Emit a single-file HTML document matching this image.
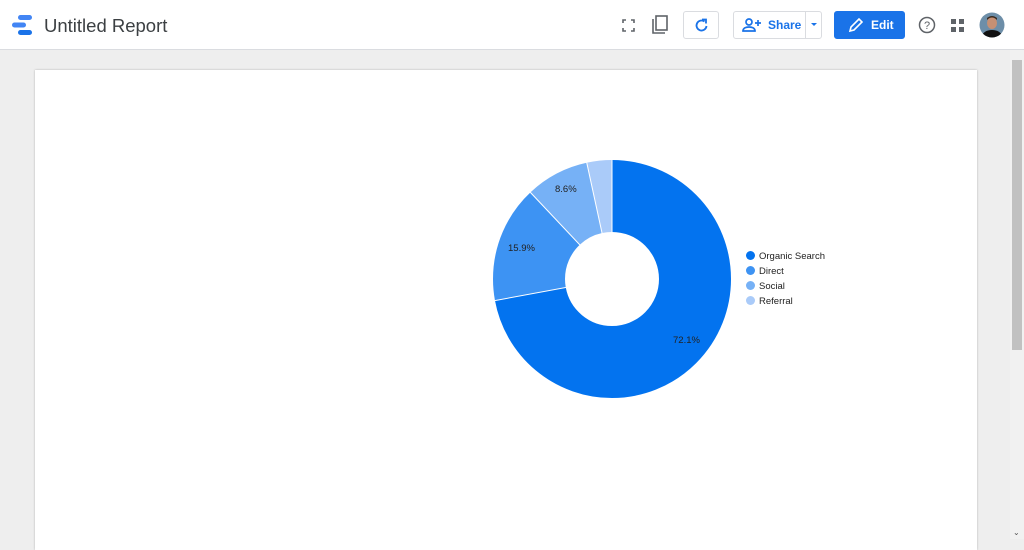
<!DOCTYPE html>
<html><head><meta charset="utf-8"><style>
*{margin:0;padding:0;box-sizing:border-box}
body{width:1024px;height:539px;overflow:hidden;background:#eeeeee;font-family:"Liberation Sans",Arial,sans-serif;position:relative}
.hdr{position:absolute;left:0;top:0;width:1024px;height:50px;background:#fff;border-bottom:1px solid #dadce0}
.title{position:absolute;left:44px;top:15px;font-size:18.5px;color:#3c4043}
.btn{position:absolute;top:11px;height:28px;border:1px solid #dadce0;border-radius:3px;background:#fff}
.page{position:absolute;left:35px;top:70px;width:942px;height:480px;background:#fff;box-shadow:0 0 2px rgba(0,0,0,.25)}
.sb{position:absolute;left:1010px;top:50px;width:14px;height:489px;background:#f1f1f1}
.th{position:absolute;left:1012px;top:60px;width:10px;height:290px;background:#c1c1c1}
.lg{position:absolute;left:746px;font-size:9.5px;color:#222}
.lg i{display:inline-block;width:9px;height:9px;border-radius:50%;margin-right:4px;vertical-align:-1px}
.lb{position:absolute;font-size:9.5px;color:#222}
</style></head><body>
<div class="hdr">
<svg style="position:absolute;left:10px;top:14px" width="24" height="22"><rect x="8" y="1" width="14" height="5" rx="2.5" fill="#4285f4"/><rect x="2" y="8.5" width="14" height="5" rx="2.5" fill="#4285f4"/><rect x="8" y="16" width="14" height="5" rx="2.5" fill="#1a73e8"/></svg>
<div class="title">Untitled Report</div>
<svg style="position:absolute;left:622px;top:19px" width="13" height="13" fill="none" stroke="#5f6368" stroke-width="1.6"><path d="M1 4V1h3M9 1h3v3M12 9v3H9M4 12H1V9"/></svg>
<svg style="position:absolute;left:651px;top:15px" width="18" height="20" fill="none" stroke="#5f6368" stroke-width="1.6"><path d="M2 4v14h12"/><rect x="5" y="1" width="11" height="14"/></svg>
<div class="btn" style="left:683px;width:36px"><svg style="position:absolute;left:10px;top:6px" width="15" height="15" fill="none" stroke="#1a73e8" stroke-width="1.8"><path d="M12.5 8A5 5 0 1 1 10.5 3.5"/><path d="M8 1.5h4v4" /></svg></div>
<div class="btn" style="left:733px;width:89px"><svg style="position:absolute;left:8px;top:6px" width="20" height="14" fill="none" stroke="#1a73e8" stroke-width="1.7"><circle cx="7" cy="4" r="3"/><path d="M1 13c0-3 3-4 6-4s6 1 6 4z"/><path d="M16 2v6M13 5h6"/></svg><span style="position:absolute;left:34px;top:6px;font-size:12px;font-weight:bold;color:#1a73e8">Share</span><div style="position:absolute;left:71px;top:0;width:1px;height:26px;background:#dadce0"></div><div style="position:absolute;left:77px;top:11px;border-left:3px solid transparent;border-right:3px solid transparent;border-top:3px solid #1a73e8"></div></div>
<div class="btn" style="left:834px;width:71px;background:#1a73e8;border-color:#1a73e8"><svg style="position:absolute;left:13px;top:6px" width="15" height="15" fill="none" stroke="#fff" stroke-width="1.6"><path d="M2 13l1-4 8-8 3 3-8 8z"/></svg><span style="position:absolute;left:36px;top:6px;font-size:12px;font-weight:bold;color:#fff">Edit</span></div>
<svg style="position:absolute;left:918px;top:16px" width="18" height="18"><circle cx="9" cy="9" r="7.5" fill="none" stroke="#5f6368" stroke-width="1.5"/><text x="9" y="13" font-size="11" text-anchor="middle" fill="#5f6368" font-family="Liberation Sans">?</text></svg>
<svg style="position:absolute;left:951px;top:19px" width="13" height="13" fill="#5f6368"><rect width="5" height="5"/><rect x="8" width="5" height="5"/><rect y="8" width="5" height="5"/><rect x="8" y="8" width="5" height="5"/></svg>
<svg style="position:absolute;left:979px;top:12px" width="26" height="26"><clipPath id="c"><circle cx="13" cy="13" r="12.5"/></clipPath><g clip-path="url(#c)"><rect width="26" height="26" fill="#6d8ea8"/><ellipse cx="13" cy="11" rx="5" ry="6" fill="#c69074"/><path d="M8 8q5-5 10 0v-2q-5-4-10 0z" fill="#3a2b20"/><path d="M2 26q2-8 11-8t11 8z" fill="#111"/></g></svg>
</div>
<div class="page"></div>
<svg style="position:absolute;left:0;top:0" width="1024" height="539">
<g transform="rotate(-90 612 279)" fill="none" stroke-width="72">
<circle cx="612" cy="279" r="83" stroke="#0373ef" stroke-dasharray="376 600"/>
<circle cx="612" cy="279" r="83" stroke="#3d93f3" stroke-dasharray="0 376 82.9 600"/>
<circle cx="612" cy="279" r="83" stroke="#76b1f6" stroke-dasharray="0 458.9 44.85 600"/>
<circle cx="612" cy="279" r="83" stroke="#aacbf9" stroke-dasharray="0 503.75 17.8 600"/>
</g>
<g stroke="#fff" stroke-width="1"><line x1="612" y1="279" x2="612" y2="159"/><line x1="612" y1="279" x2="494.8" y2="300.6"/><line x1="612" y1="279" x2="530" y2="192"/><line x1="612" y1="279" x2="586.6" y2="162"/></g>
<circle cx="612" cy="279" r="46.5" fill="#fff"/>
</svg>
<div class="lb" style="left:555px;top:184px">8.6%</div>
<div class="lb" style="left:508px;top:243px">15.9%</div>
<div class="lb" style="left:673px;top:335px">72.1%</div>
<div class="lg" style="top:251px"><i style="background:#0373ef"></i>Organic Search</div>
<div class="lg" style="top:266px"><i style="background:#3d93f3"></i>Direct</div>
<div class="lg" style="top:281px"><i style="background:#76b1f6"></i>Social</div>
<div class="lg" style="top:296px"><i style="background:#aacbf9"></i>Referral</div>
<div class="sb"></div><div class="th"></div>
<div style="position:absolute;left:1013px;top:528px;font-size:8px;color:#555">&#8964;</div>
</body></html>
